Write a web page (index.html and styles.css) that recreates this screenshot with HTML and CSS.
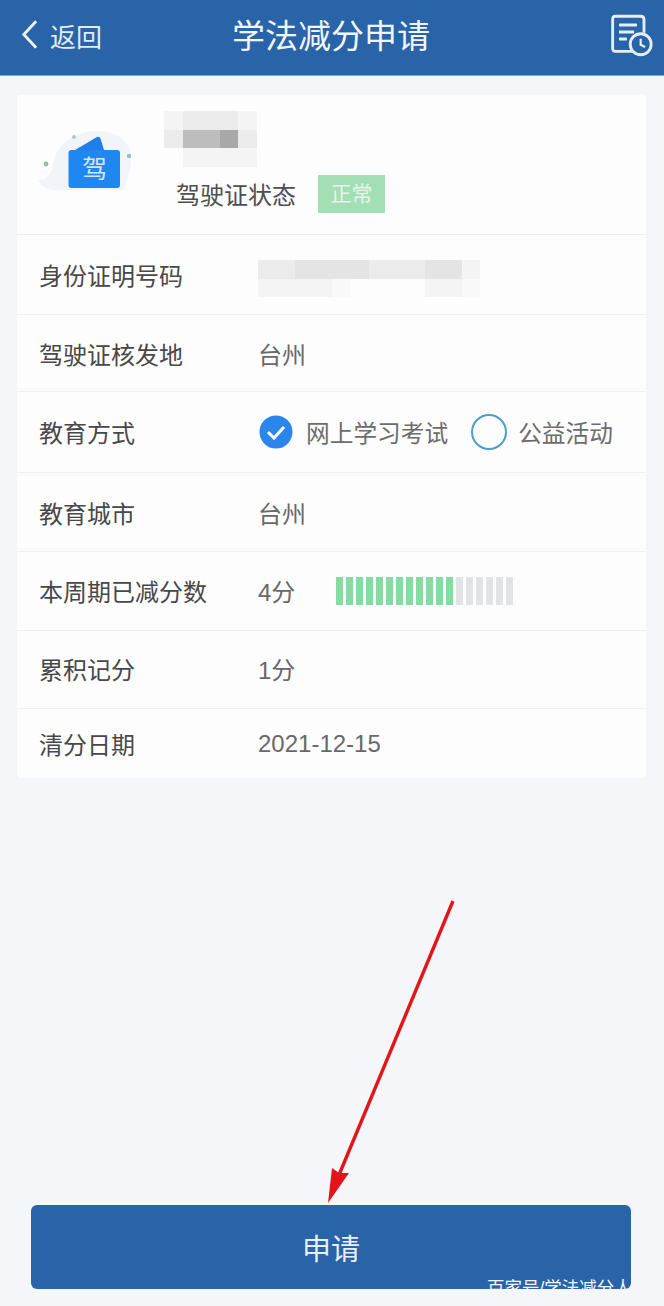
FILE: index.html
```html
<!DOCTYPE html>
<html>
<head>
    <title>学法减分申请</title>
    <meta charset="UTF-8">
    <meta name="viewport" content="width=device-width, initial-scale=1.0">
    <link rel="stylesheet" href="styles.css">
</head>
<body>
    <header class="topbar">
        <div class="back">
            <svg class="back-icon" viewBox="0 0 20 32">
                <path d="M17 2 L4 16 L17 30"/>
            </svg>
            <span>返回</span>
        </div>
        <h1>学法减分申请</h1>
        <svg class="record-icon" viewBox="0 0 40 40">
            <path d="M22 34 H4 Q1.5 34 1.5 31 V5 Q1.5 2 4 2 H27 Q30 2 30 5 V17"/>
            <path d="M7.3 10 H23.6 M7.3 16.4 H21 M7.3 22.7 H14.5"/>
            <circle cx="27" cy="27.5" r="9.5"/>
            <path class="thin" d="M27 22.5 V28 L31 30"/>
        </svg>
    </header>

    <main class="card">
        <section class="profile">
            <svg class="licence-art" viewBox="0 0 100 80">
                <path fill="#f1f5f9" d="M0 50 Q10 50 14 40 Q16 12 44 3 Q68 -3 84 8 Q96 20 92 40 L86 60 L14 60 Q4 58 0 50 Z"/>
                <path fill="#1f7fe8" d="M37 20 L59 7 Q62 6 63 10 L66 20 Z"/>
                <rect x="30.5" y="20" width="51.5" height="38" rx="3" fill="#1f88f0"/>
                <circle cx="8" cy="34" r="2.4" fill="#86c792"/>
                <circle cx="36" cy="7" r="2" fill="#b4c6c6"/>
                <circle cx="91" cy="26" r="2.2" fill="#9dbcc2"/>
            </svg>
            <span class="licence-char">驾</span>
            <div class="profile-info">
                <div class="mosaic mosaic-name">
                    <i class="m1"></i><i class="m2"></i><i class="m2"></i><i class="m2"></i><i class="m1"></i>
                    <i class="m2"></i><i class="m5"></i><i class="m5"></i><i class="m6"></i><i class="m2"></i>
                    <i></i><i class="m1"></i><i class="m1"></i><i class="m1"></i><i class="m1"></i>
                </div>
                <div class="status">
                    <span>驾驶证状态</span>
                    <em class="badge">正常</em>
                </div>
            </div>
        </section>

        <div class="row row-id">
            <span class="label">身份证明号码</span>
            <div class="mosaic mosaic-id">
                <i class="m2"></i><i class="m2"></i><i class="m3"></i><i class="m3"></i><i class="m3"></i><i class="m3"></i><i class="m2"></i><i class="m2"></i><i class="m2"></i><i class="m3"></i><i class="m3"></i><i class="m1"></i>
                <i class="m1"></i><i class="m1"></i><i class="m1"></i><i class="m1"></i><i class="m0"></i><i></i><i></i><i></i><i></i><i class="m1"></i><i class="m1"></i><i class="m0"></i>
            </div>
        </div>
        <div class="row row-place">
            <span class="label">驾驶证核发地</span>
            <span class="value">台州</span>
        </div>
        <div class="row row-edu">
            <span class="label">教育方式</span>
            <div class="options">
                <span class="option">
                    <svg class="check" viewBox="0 0 36 36">
                        <circle cx="18" cy="18" r="18" fill="#2a86ea"/>
                        <path d="M10 18 L16 24 L26 13"/>
                    </svg>
                    网上学习考试
                </span>
                <span class="option option-off">
                    <i class="radio"></i>
                    公益活动
                </span>
            </div>
        </div>
        <div class="row row-city">
            <span class="label">教育城市</span>
            <span class="value">台州</span>
        </div>
        <div class="row row-points">
            <span class="label">本周期已减分数</span>
            <span class="value value-short">4分</span>
            <div class="meter">
                <i class="on"></i><i class="on"></i><i class="on"></i><i class="on"></i><i class="on"></i><i class="on"></i><i class="on"></i><i class="on"></i><i class="on"></i><i class="on"></i><i class="on"></i><i class="on"></i>
                <i></i><i></i><i></i><i></i><i></i><i></i>
            </div>
        </div>
        <div class="row row-score">
            <span class="label">累积记分</span>
            <span class="value">1分</span>
        </div>
        <div class="row row-date">
            <span class="label">清分日期</span>
            <span class="value">2021-12-15</span>
        </div>
    </main>

    <div class="footer">
        <button type="button">申请</button>
        <span class="watermark"><span>百家号/学法减分人</span></span>
    </div>

    <svg class="arrow" viewBox="0 0 664 1306">
        <path class="shaft" d="M453 901 L339 1175"/>
        <path class="head" d="M328 1203 L332 1168 L339 1173 L349 1173 Z"/>
    </svg>
</body>
</html>
```
FILE: styles.css
```css
* {
    margin: 0;
    padding: 0;
    box-sizing: border-box;
    font-family: "Liberation Sans", "Noto Sans CJK SC", sans-serif;
}

body {
    position: relative;
    width: 664px;
    height: 1306px;
    overflow: hidden;
    background: #f4f6f9;
}

.topbar {
    position: relative;
    display: flex;
    align-items: center;
    justify-content: center;
    height: 76px;
    padding: 0 2px 7px 0;
    background: #2963a8;
    border-bottom: 1px solid #7fa6d4;
    color: #fff;
}

.topbar h1 {
    font-size: 33px;
    font-weight: 400;
    color: #f2f6fa;
    letter-spacing: 0;
}

.back {
    position: absolute;
    left: 20px;
    top: 17px;
    display: flex;
    align-items: center;
    gap: 11px;
    font-size: 26px;
    color: #e3ebf4;
}

.back-icon {
    width: 19px;
    height: 31px;
    margin-top: -3px;
    fill: none;
    stroke: #eef3f9;
    stroke-width: 3;
}

.record-icon {
    position: absolute;
    left: 611px;
    top: 14px;
    width: 44px;
    height: 44px;
    fill: none;
    stroke: #e6eef7;
    stroke-width: 2.6;
}

.record-icon circle {
    fill: #2963a8;
}

.record-icon .thin {
    stroke-width: 2;
}

.card {
    margin: 19px 18px 0 17px;
    background: #fdfdfe;
    border-radius: 3px;
    color: #4a4a4a;
}

.profile {
    position: relative;
    display: flex;
    height: 140px;
    border-bottom: 1px solid #eceef0;
}

.licence-art {
    position: absolute;
    left: 21px;
    top: 35px;
    width: 100px;
    height: 80px;
}

.licence-char {
    position: absolute;
    left: 65px;
    top: 59px;
    font-size: 25px;
    line-height: 30px;
    color: #d3e6fb;
}

.profile-info {
    margin-left: 147px;
    padding-top: 16px;
}

.mosaic {
    display: grid;
}

.mosaic i {
    background: #fdfdfe;
}

.mosaic .m0 { background: #f9f9fa; }
.mosaic .m1 { background: #f4f4f5; }
.mosaic .m2 { background: #ebebec; }
.mosaic .m3 { background: #e4e4e5; }
.mosaic .m5 { background: #bdbdbe; }
.mosaic .m6 { background: #a8a8a9; }

.mosaic-name {
    grid-template-columns: repeat(5, 18.5px);
    grid-auto-rows: 18.5px;
}

.status {
    display: flex;
    align-items: center;
    margin: 8px 0 0 12px;
    font-size: 24px;
    color: #4f4f4f;
}

.badge {
    width: 67px;
    height: 38px;
    margin-left: 22px;
    background: #a3deb4;
    color: #e6f5ea;
    font-style: normal;
    font-size: 21px;
    line-height: 38px;
    text-align: center;
}

.row {
    display: flex;
    align-items: center;
    padding-left: 22px;
    border-bottom: 1px solid #eff0f2;
    font-size: 24px;
}

.label {
    width: 219px;
    flex-shrink: 0;
    color: #484848;
}

.value {
    color: #686868;
}

.row-id { height: 80px; }
.row-place { height: 77px; }
.row-edu { height: 81px; padding-bottom: 2px; }
.row-city { height: 79px; }
.row-points { height: 79px; padding-bottom: 2px; }
.row-score { height: 78px; padding-bottom: 2px; }
.row-date { height: 69px; border-bottom: 0; }

.mosaic-id {
    grid-template-columns: repeat(12, 18.5px);
    grid-auto-rows: 18.5px;
    margin-top: 8px;
}

.options {
    display: flex;
    align-items: center;
    margin-top: 2px;
    color: #6c6c6c;
}

.option {
    display: flex;
    align-items: center;
    gap: 12px;
    font-size: 23.7px;
}

.option-off {
    margin-left: 23px;
    gap: 11px;
}

.check {
    width: 36px;
    height: 36px;
    fill: none;
    stroke: #fff;
    stroke-width: 3;
}

.radio {
    width: 36px;
    height: 36px;
    border: 2px solid #4a9fc9;
    border-radius: 50%;
}

.value-short {
    width: 78px;
    flex-shrink: 0;
}

.meter {
    display: flex;
    gap: 3px;
    margin-top: 2px;
}

.meter i {
    width: 7px;
    height: 28px;
    background: #e2e3e5;
}

.meter .on {
    background: #86dca0;
}

.footer {
    position: absolute;
    left: 31px;
    top: 1205px;
    width: 600px;
    height: 84px;
}

.footer button {
    width: 100%;
    height: 100%;
    border: 0;
    border-radius: 6px;
    background: #2963a8;
    color: #e9f0f8;
    font-size: 29px;
}

.watermark {
    position: absolute;
    left: 456px;
    top: 71px;
    width: 144px;
    height: 13px;
    overflow: hidden;
    color: #f4f7fb;
    font-size: 17.5px;
    white-space: nowrap;
}

.watermark span {
    display: block;
    line-height: 24px;
}

.arrow {
    position: absolute;
    left: 0;
    top: 0;
    width: 664px;
    height: 1306px;
    pointer-events: none;
}

.shaft {
    fill: none;
    stroke: #e3141a;
    stroke-width: 3.4;
}

.head {
    fill: #e3141a;
}
```
